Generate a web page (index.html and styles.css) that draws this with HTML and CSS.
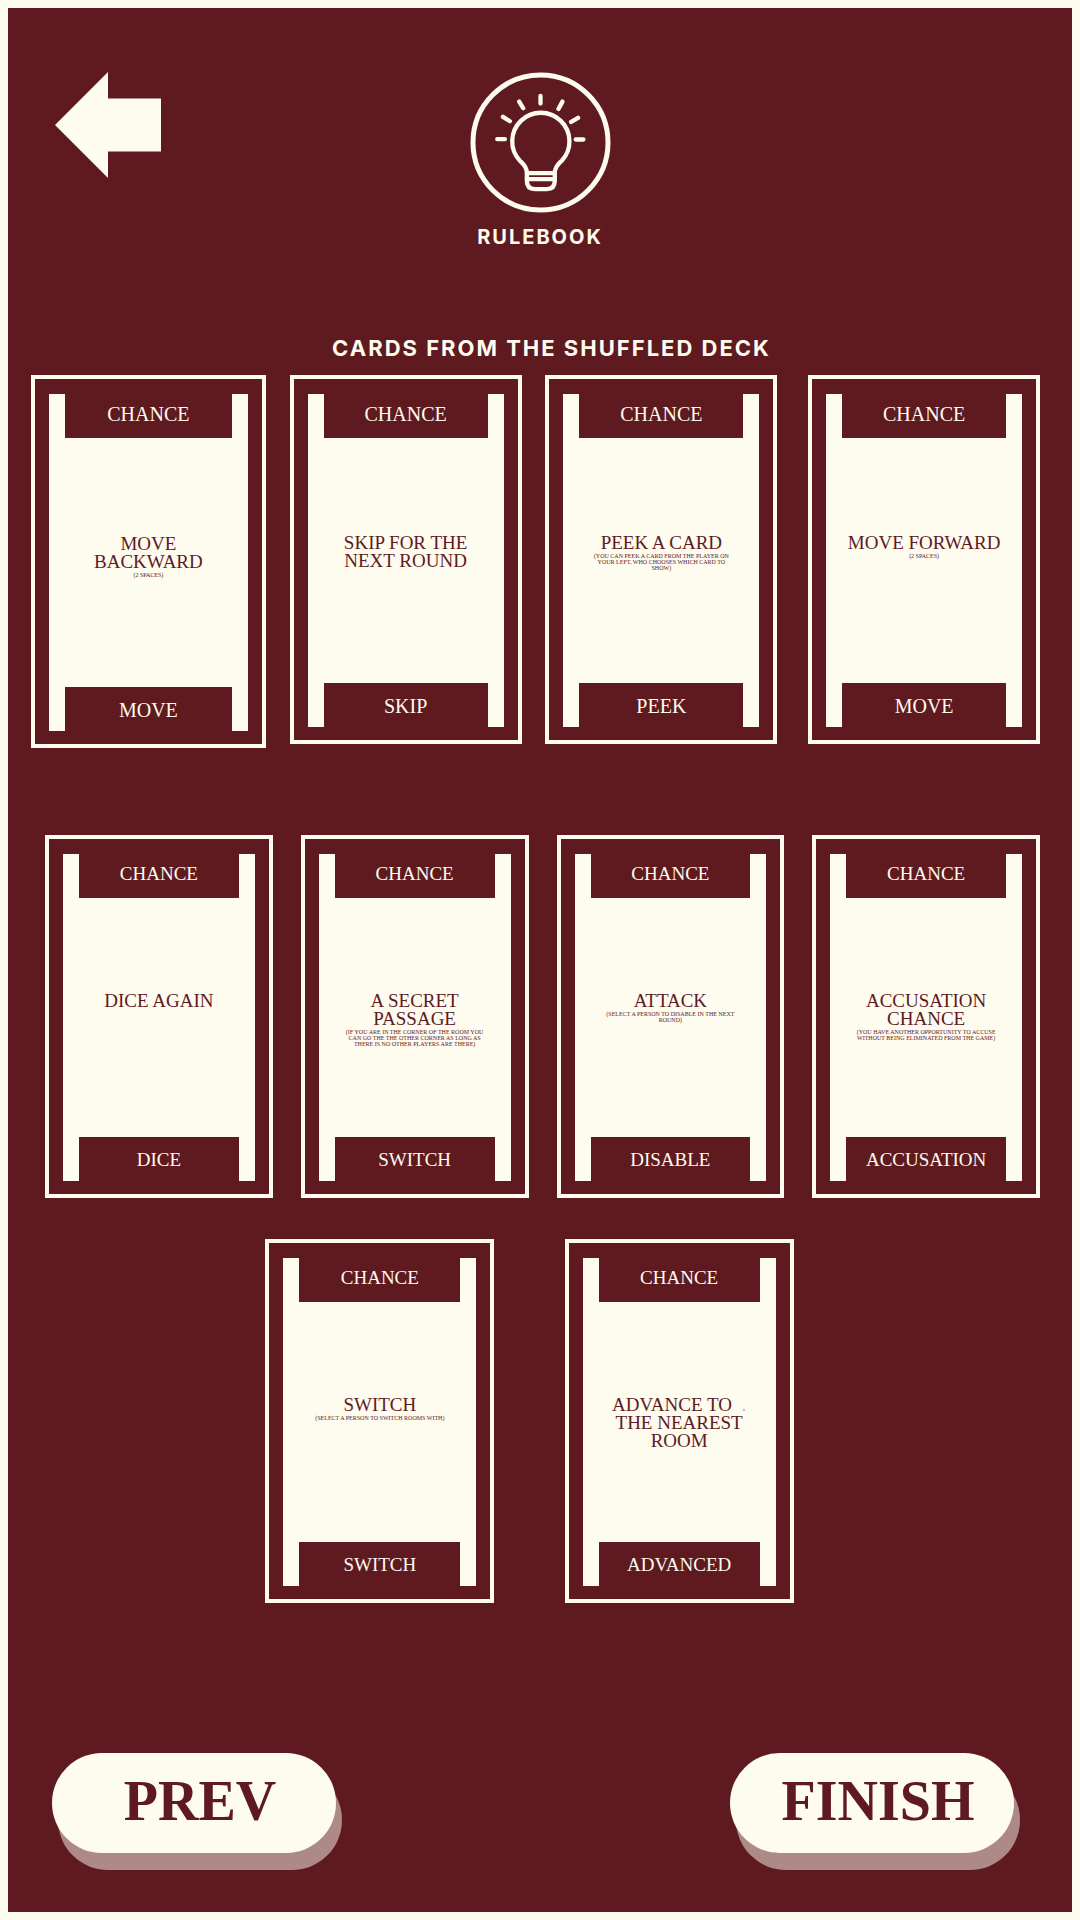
FILE: index.html
```html
<!DOCTYPE html>
<html lang="en">
<head>
<meta charset="utf-8">
<meta name="viewport" content="width=device-width, initial-scale=1">
<title>Rulebook</title>
<link rel="stylesheet" href="styles.css">
</head>
<body>
<div class="page">
  <header class="top">
    <a class="back" href="#" aria-label="Back">
      <svg viewBox="0 0 106 106" width="106" height="106" aria-hidden="true"><path d="M0 53 53 0V26.500H106V79.500H53V106Z" fill="currentColor"/></svg>
    </a>
    <div class="brand">
      <svg class="brand-icon" viewBox="89 65 422 424" width="141" height="141" fill="none" stroke="currentColor" stroke-linecap="round" stroke-linejoin="round" aria-hidden="true">
        <circle cx="300" cy="277" r="203" stroke-width="15"/>
        <path stroke-width="13" d="M259 369C259 348 247 341 238 332A86 86 0 1 1 364 332C355 341 343 348 343 369V392Q343 417 319 417H283Q259 417 259 392Z"/>
        <path stroke-width="13" d="M259 369H343M259 387H343"/>
        <path stroke-width="13" d="M300 137V160M236 154 248 174M366 154 354 176M187 200 208 213M413 203 392 215M170 267H193M406 268H429"/>
      </svg>
      <h1 class="brand-name">RULEBOOK</h1>
    </div>
  </header>

  <main class="deck">
    <h2 class="deck-title">CARDS FROM THE SHUFFLED DECK</h2>

    <div class="row row-first">
      <article class="card"><div class="face">
        <p class="band band-top">CHANCE</p>
        <div class="body"><h3 class="name">MOVE<br>BACKWARD</h3><p class="note">(2 SPACES)</p></div>
        <p class="band band-bottom">MOVE</p>
      </div></article>
      <article class="card"><div class="face">
        <p class="band band-top">CHANCE</p>
        <div class="body"><h3 class="name">SKIP FOR THE<br>NEXT ROUND</h3></div>
        <p class="band band-bottom">SKIP</p>
      </div></article>
      <article class="card"><div class="face">
        <p class="band band-top">CHANCE</p>
        <div class="body"><h3 class="name">PEEK A CARD</h3><p class="note">(YOU CAN PEEK A CARD FROM THE PLAYER ON<br>YOUR LEFT, WHO CHOOSES WHICH CARD TO<br>SHOW)</p></div>
        <p class="band band-bottom">PEEK</p>
      </div></article>
      <article class="card"><div class="face">
        <p class="band band-top">CHANCE</p>
        <div class="body"><h3 class="name">MOVE FORWARD</h3><p class="note">(2 SPACES)</p></div>
        <p class="band band-bottom">MOVE</p>
      </div></article>
    </div>

    <div class="row row-second">
      <article class="card"><div class="face">
        <p class="band band-top">CHANCE</p>
        <div class="body"><h3 class="name">DICE AGAIN</h3></div>
        <p class="band band-bottom">DICE</p>
      </div></article>
      <article class="card"><div class="face">
        <p class="band band-top">CHANCE</p>
        <div class="body"><h3 class="name">A SECRET<br>PASSAGE</h3><p class="note">(IF YOU ARE IN THE CORNER OF THE ROOM YOU<br>CAN GO THE THE OTHER CORNER AS LONG AS<br>THERE IS NO OTHER PLAYERS ARE THERE)</p></div>
        <p class="band band-bottom">SWITCH</p>
      </div></article>
      <article class="card"><div class="face">
        <p class="band band-top">CHANCE</p>
        <div class="body"><h3 class="name">ATTACK</h3><p class="note">(SELECT A PERSON TO DISABLE IN THE NEXT<br>ROUND)</p></div>
        <p class="band band-bottom">DISABLE</p>
      </div></article>
      <article class="card"><div class="face">
        <p class="band band-top">CHANCE</p>
        <div class="body"><h3 class="name">ACCUSATION<br>CHANCE</h3><p class="note">(YOU HAVE ANOTHER OPPORTUNITY TO ACCUSE<br>WITHOUT BEING ELIMINATED FROM THE GAME)</p></div>
        <p class="band band-bottom">ACCUSATION</p>
      </div></article>
    </div>

    <div class="row row-third">
      <article class="card"><div class="face">
        <p class="band band-top">CHANCE</p>
        <div class="body"><h3 class="name">SWITCH</h3><p class="note">(SELECT A PERSON TO SWITCH ROOMS WITH)</p></div>
        <p class="band band-bottom">SWITCH</p>
      </div></article>
      <article class="card"><div class="face">
        <p class="band band-top">CHANCE</p>
        <div class="body"><h3 class="name">ADVANCE TO&nbsp;&nbsp;<span class="faint">.</span><br>THE NEAREST<br>ROOM</h3></div>
        <p class="band band-bottom">ADVANCED</p>
      </div></article>
    </div>
  </main>

  <footer class="actions">
    <button class="pill" type="button">PREV</button>
    <button class="pill" type="button">FINISH</button>
  </footer>
</div>
</body>
</html>
```
FILE: styles.css
```css
:root {
  --maroon: #5e1a1f;
  --cream: #fefbef;
  --shadow: #ae8a87;
}

* {
  box-sizing: border-box;
}

body,
h1,
h2,
h3,
p {
  margin: 0;
}

body {
  background: var(--maroon);
  color: var(--cream);
  font-family: "Liberation Serif", "Times New Roman", serif;
}

.page {
  display: flex;
  flex-direction: column;
  min-height: 100vh;
  border: 8px solid var(--cream);
}

.top {
  display: grid;
  grid-template-columns: 1fr auto 1fr;
  align-items: start;
  padding: 64px 47px 0;
}

.back {
  justify-self: start;
  color: inherit;
}

.back svg,
.brand-icon {
  display: block;
}

.brand {
  display: flex;
  flex-direction: column;
  align-items: center;
  gap: 12px;
}

.brand-name,
.deck-title {
  font-family: Inter, "Liberation Sans", sans-serif;
  font-weight: 700;
  line-height: 24px;
  letter-spacing: 2px;
}

.brand-name {
  font-size: 20px;
}

.deck {
  padding: 87px 32px 0 23px;
}

.deck-title {
  padding-left: 32px;
  font-size: 22px;
  text-align: center;
}

.row {
  display: grid;
  align-items: start;
}

.row-first {
  grid-template-columns: 235fr 24fr 232fr 24fr 232fr 31fr 232fr;
  margin-top: 15px;
}

.row-first .card:nth-child(2) {
  grid-column: 3;
}

.row-first .card:nth-child(3) {
  grid-column: 5;
}

.row-first .card:nth-child(4) {
  grid-column: 7;
}

.row-second {
  grid-template-columns: repeat(4, 1fr);
  gap: 28px;
  margin-top: 87px;
  padding-left: 14px;
}

.row-third {
  grid-template-columns: 234fr 229fr 70fr 229fr 246fr;
  margin-top: 41px;
}

.row-third .card:nth-child(1) {
  grid-column: 2;
}

.row-third .card:nth-child(2) {
  grid-column: 4;
}

.card {
  display: flex;
  aspect-ratio: 232 / 369;
  padding: 15px 14px 13px;
  border: 4px solid var(--cream);
}

.face {
  display: flex;
  flex: 1;
  flex-direction: column;
  min-width: 0;
  background: var(--cream);
  color: var(--maroon);
  text-align: center;
}

.band {
  margin: 0 16px;
  background: var(--maroon);
  color: var(--cream);
  font-size: 19px;
  line-height: 40px;
}

.row-first .band {
  font-size: 20px;
}

.band-top {
  padding-bottom: 4px;
}

.band-bottom {
  padding: 3px 0 1px;
}

.body {
  flex: 1;
  padding-top: 49%;
}

.name {
  font-size: 19px;
  font-weight: 400;
  line-height: 18px;
}

.faint {
  opacity: 0.3;
}

.note {
  margin-top: 1px;
  font-size: 6px;
  line-height: 6px;
  white-space: nowrap;
}

.actions {
  display: flex;
  justify-content: space-between;
  margin-top: auto;
  padding: 48px 58px 59px 44px;
}

.pill {
  width: 284px;
  height: 100px;
  padding: 0 0 4px 12px;
  border: 0;
  border-radius: 50px;
  background: var(--cream);
  box-shadow: 6px 17px 0 var(--shadow);
  color: var(--maroon);
  font-family: inherit;
  font-size: 56px;
  font-weight: 700;
  cursor: pointer;
}
```
